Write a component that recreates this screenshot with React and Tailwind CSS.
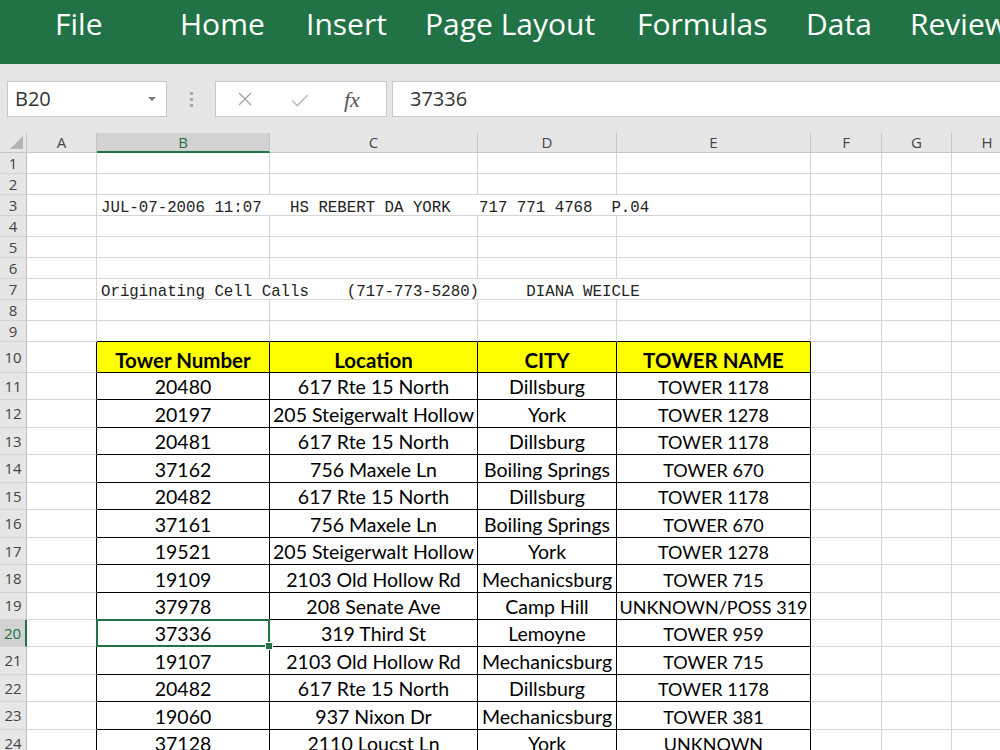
import { X, Check } from "lucide-react";

const TABS = [
  { label: "File", w: "w-[125px]" },
  { label: "Home", w: "w-[126px]" },
  { label: "Insert", w: "w-[119px]" },
  { label: "Page Layout", w: "w-[212px]" },
  { label: "Formulas", w: "w-[169px]" },
  { label: "Data", w: "w-[104px]" },
  { label: "Review", w: "w-[120px]" },
];

const COLS = [
  { k: "A", w: "w-[70px]" },
  { k: "B", w: "w-[173px]" },
  { k: "C", w: "w-[208px]" },
  { k: "D", w: "w-[139px]" },
  { k: "E", w: "w-[194px]" },
  { k: "F", w: "w-[71px]" },
  { k: "G", w: "w-[70px]" },
  { k: "H", w: "w-[71px]" },
];

const TABLE = [
  ["20480", "617 Rte 15 North", "Dillsburg", "TOWER 1178"],
  ["20197", "205 Steigerwalt Hollow", "York", "TOWER 1278"],
  ["20481", "617 Rte 15 North", "Dillsburg", "TOWER 1178"],
  ["37162", "756 Maxele Ln", "Boiling Springs", "TOWER 670"],
  ["20482", "617 Rte 15 North", "Dillsburg", "TOWER 1178"],
  ["37161", "756 Maxele Ln", "Boiling Springs", "TOWER 670"],
  ["19521", "205 Steigerwalt Hollow", "York", "TOWER 1278"],
  ["19109", "2103 Old Hollow Rd", "Mechanicsburg", "TOWER 715"],
  ["37978", "208 Senate Ave", "Camp Hill", "UNKNOWN/POSS 319"],
  ["37336", "319 Third St", "Lemoyne", "TOWER 959"],
  ["19107", "2103 Old Hollow Rd", "Mechanicsburg", "TOWER 715"],
  ["20482", "617 Rte 15 North", "Dillsburg", "TOWER 1178"],
  ["19060", "937 Nixon Dr", "Mechanicsburg", "TOWER 381"],
  ["37128", "2110 Loucst Ln", "York", "UNKNOWN"],
];

const HEADERS = ["Tower Number", "Location", "CITY", "TOWER NAME"];

const ui = { fontFamily: '"Open Sans", "Noto Sans", sans-serif' };
const cellFont = { fontFamily: 'Lato, "Open Sans", sans-serif' };
const mono = { fontFamily: '"Liberation Mono", "DejaVu Sans Mono", monospace' };

function RowHead({ n, active }) {
  return (
    <div
      className={`w-[27px] shrink-0 flex items-center justify-center text-[15px] border-b border-b-[#d4d4d4] ${
        active
          ? "bg-[#d2d2d2] text-[#217346] border-r-2 border-r-[#217346]"
          : "bg-[#e6e6e6] text-[#444] border-r border-r-[#bdbdbd]"
      }`}
      style={ui}
    >
      {n}
    </div>
  );
}

function EmptyRow({ n, h, tableTop }) {
  return (
    <div className={`flex ${h}`}>
      <RowHead n={n} />
      {COLS.map((c, i) => (
        <div
          key={c.k}
          className={`${c.w} shrink-0 border-r border-b border-r-[#d4d4d4] ${
            tableTop && i >= 1 && i <= 4 ? "border-b-black" : "border-b-[#d4d4d4]"
          }`}
        />
      ))}
    </div>
  );
}

function TextRow({ n, text }) {
  return (
    <div className="flex h-[21px]">
      <RowHead n={n} />
      <div className="w-[70px] shrink-0 border-r border-b border-[#d4d4d4]" />
      <div
        className="w-[714px] shrink-0 border-r border-b border-[#d4d4d4] flex items-end pl-[4px] text-[15.75px] leading-[13px] whitespace-pre text-[#222]"
        style={mono}
      >
        {text}
      </div>
      {COLS.slice(5).map((c) => (
        <div key={c.k} className={`${c.w} shrink-0 border-r border-b border-[#d4d4d4]`} />
      ))}
    </div>
  );
}

function TableRow({ n, h, values, bold, selected }) {
  return (
    <div className={`flex ${h}`}>
      <RowHead n={n} active={selected} />
      <div className="w-[70px] shrink-0 border-r border-b border-r-black border-b-[#d4d4d4]" />
      {values.map((v, i) => (
        <div
          key={i}
          className={`${COLS[i + 1].w} relative shrink-0 border-r border-b border-black flex items-end justify-center pb-[2px] leading-[20px] whitespace-nowrap text-black ${
            bold ? "bg-[#ffff00] font-bold text-[20.5px]" : i === 3 ? "text-[18px]" : "text-[19.5px]"
          }`}
          style={cellFont}
        >
          {v}
          {selected && i === 0 && (
            <div className="absolute z-10 -left-[1px] -top-[1px] -right-[1px] -bottom-[1px] border-2 border-[#217346]">
              <div className="absolute -right-[5px] -bottom-[5px] w-[8px] h-[8px] bg-[#217346] border border-white" />
            </div>
          )}
        </div>
      ))}
      {COLS.slice(5).map((c) => (
        <div key={c.k} className={`${c.w} shrink-0 border-r border-b border-[#d4d4d4]`} />
      ))}
    </div>
  );
}

export default function App() {
  return (
    <div className="w-[1000px] h-[750px] overflow-hidden bg-white flex flex-col">
      <div className="h-[64px] shrink-0 bg-[#217346] flex items-start pt-[9px] pl-[55px] text-white text-[30px] leading-none whitespace-nowrap" style={ui}>
        {TABS.map((t) => (
          <div key={t.label} className={`${t.w} shrink-0`}>
            {t.label}
          </div>
        ))}
      </div>

      <div className="h-[69px] shrink-0 bg-[#e6e6e6] pt-[17px]">
        <div className="flex h-[36px] pl-[7px]">
          <div className="w-[160px] shrink-0 bg-white border border-[#c6c6c6] flex items-center justify-between pl-[7px] pr-[10px] text-[20px] text-[#333]" style={ui}>
            <span>B20</span>
            <span className="w-0 h-0 border-l-[4px] border-r-[4px] border-t-[4px] border-l-transparent border-r-transparent border-t-[#777]" />
          </div>
          <div className="w-[48px] shrink-0 flex flex-col items-center justify-center gap-[3px]">
            <span className="w-[3px] h-[3px] bg-[#a6a6a6]" />
            <span className="w-[3px] h-[3px] bg-[#a6a6a6]" />
            <span className="w-[3px] h-[3px] bg-[#a6a6a6]" />
          </div>
          <div className="w-[172px] shrink-0 bg-white border border-[#c6c6c6] flex items-center pl-[18px]">
            <X size={22} strokeWidth={1.4} className="text-[#a0a0a0]" />
            <Check size={22} strokeWidth={1.8} className="text-[#bcbcbc] ml-[33px] mt-[3px]" />
            <span className="ml-[33px] text-[22px] italic text-[#555]" style={{ fontFamily: '"Liberation Serif", serif' }}>
              fx
            </span>
          </div>
          <div className="flex-1 ml-[5px] bg-white border border-r-0 border-[#c6c6c6] flex items-center pl-[17px] text-[20px] text-[#333]" style={ui}>
            37336
          </div>
        </div>
      </div>

      <div className="flex h-[20px] shrink-0 bg-[#e6e6e6] text-[15px] text-[#444]" style={ui}>
        <div className="w-[27px] shrink-0 relative border-r border-b border-[#c6c6c6]">
          <svg className="absolute right-[3px] bottom-[3px]" width="13" height="13" viewBox="0 0 13 13">
            <path d="M13 0 L13 13 L0 13 Z" fill="#b4b4b4" />
          </svg>
        </div>
        {COLS.map((c) => (
          <div
            key={c.k}
            className={`${c.w} shrink-0 flex items-center justify-center border-r ${
              c.k === "B"
                ? "bg-[#d2d2d2] text-[#217346] border-b-2 border-b-[#217346] border-r-[#c6c6c6]"
                : "border-b border-[#c6c6c6]"
            }`}
          >
            {c.k}
          </div>
        ))}
      </div>

      <div className="flex flex-col">
        <EmptyRow n={1} h="h-[21px]" />
        <EmptyRow n={2} h="h-[21px]" />
        <TextRow n={3} text="JUL-07-2006 11:07   HS REBERT DA YORK   717 771 4768  P.04" />
        <EmptyRow n={4} h="h-[21px]" />
        <EmptyRow n={5} h="h-[21px]" />
        <EmptyRow n={6} h="h-[21px]" />
        <TextRow n={7} text="Originating Cell Calls    (717-773-5280)     DIANA WEICLE" />
        <EmptyRow n={8} h="h-[21px]" />
        <EmptyRow n={9} h="h-[21px]" tableTop />
        <TableRow n={10} h="h-[31px]" values={HEADERS} bold />
        {TABLE.map((r, i) => (
          <TableRow key={i} n={11 + i} h="h-[27.45px]" values={r} selected={11 + i === 20} />
        ))}
      </div>
    </div>
  );
}
